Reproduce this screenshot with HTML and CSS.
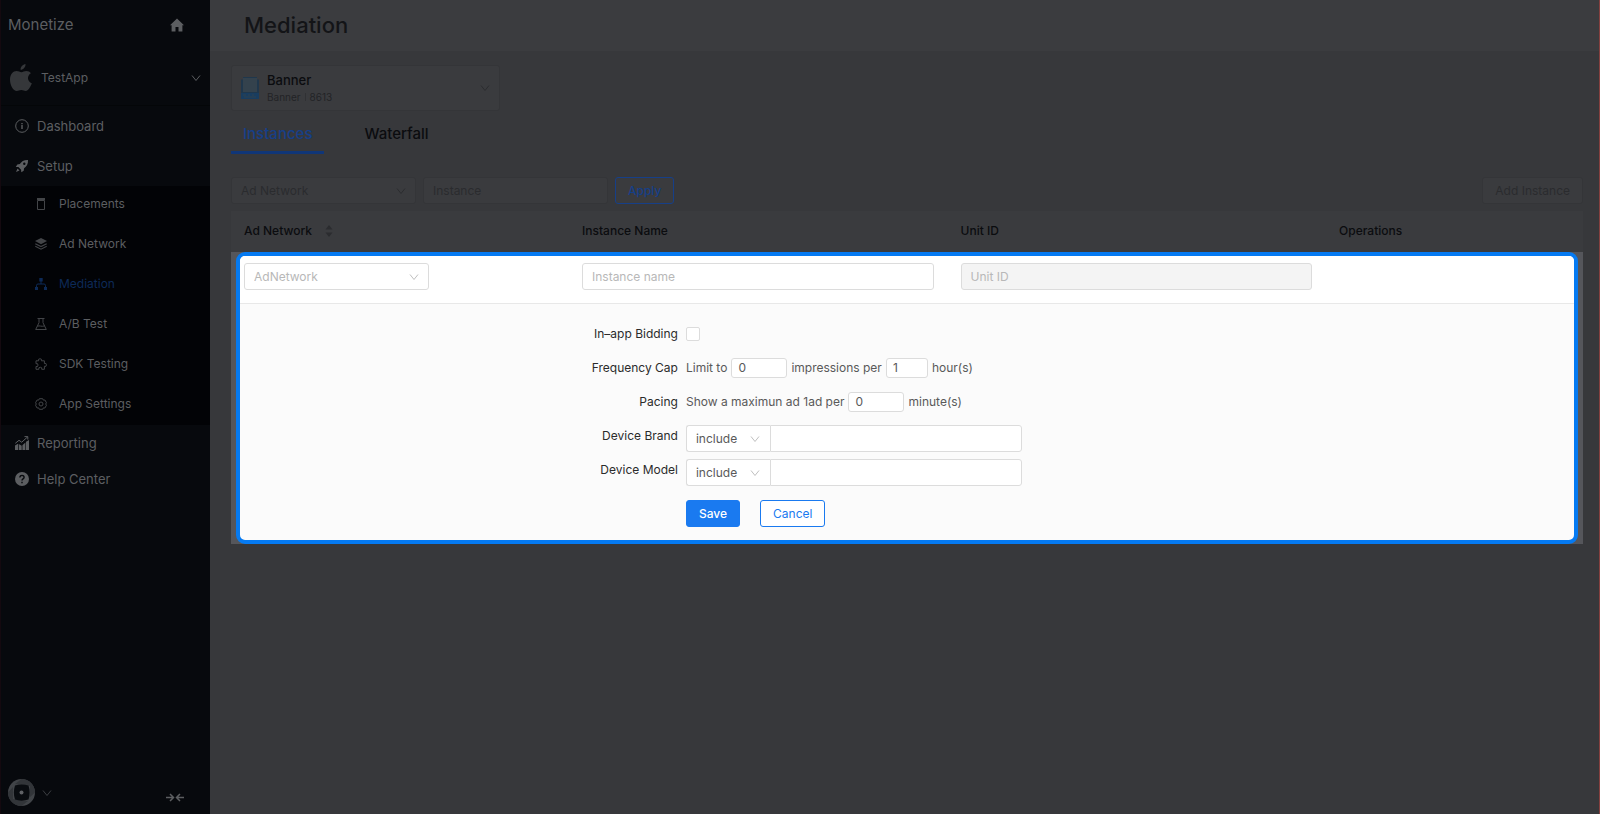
FILE: index.html
```
<!DOCTYPE html>
<html lang="en">
<head>
  <meta charset="UTF-8">
  <meta name="viewport" content="width=device-width, initial-scale=1.0">
  <title>Monetize - Mediation</title>
  <link rel="stylesheet" href="styles.css">
</head>
<body>
  <svg class="sprite" aria-hidden="true">
    <symbol id="chevron" viewBox="0 0 10 8"><path d="M1 1.5l4 5 4-5" fill="none" stroke="currentColor"/></symbol>
  </svg>

  <aside class="sidebar">
    <div class="brand">
      <span>Monetize</span>
      <a href="#" aria-label="Home">
        <svg width="14" height="14" viewBox="0 0 14 14"><path fill="currentColor" d="M7 .5L0 7.2h1.6V13.500h3.900V9h3v4.500h3.900V7.200H14z"/></svg>
      </a>
    </div>
    <button class="app-switch">
      <svg width="22" height="28" viewBox="0 0 22 28"><path fill="currentColor" d="M15.500 0c.3 2.900-2.100 5.800-4.900 5.800C10.300 3 12.900.3 15.500 0zM20.900 9.300c-4.300 2.600-3.700 8.200.9 10-1.300 3.700-3.700 7.600-6 7.600-1.700 0-2.400-1-4.500-1s-2.900 1-4.500 1C3.300 26.900 0 21.300 0 15.700 0 10.200 3.200 7 6.600 7c2 0 3.300 1.200 4.800 1.200S14.200 7 16.500 7c1.700 0 3.400.9 4.400 2.300z"/></svg>
      <span>TestApp</span>
      <svg class="chev" width="10" height="8"><use href="#chevron"/></svg>
    </button>

    <nav>
      <div class="menu top-menu">
        <a href="#">
          <svg width="14" height="14" viewBox="0 0 14 14" fill="none" stroke="currentColor"><circle cx="7" cy="7" r="6.300"/><path d="M7 6v4M7 4v1.200" stroke-width="1.400"/></svg>
          Dashboard
        </a>
        <a href="#">
          <svg width="14" height="14" viewBox="0 0 14 14"><path fill="currentColor" fill-rule="evenodd" d="M13 1C9 .8 6.500 2.500 4.800 5L2.300 5.400.8 7.900l2.600.1 2.700 2.700.2 2.600 2.400-1.500.4-2.500C11.600 7.500 13.300 5 13 1zM9.300 3.600a1.200 1.200 0 1 1 0 2.400 1.200 1.200 0 0 1 0-2.400zM2.500 9.500L1 13l3.500-1.500z"/></svg>
          Setup
        </a>
      </div>
      <div class="submenu">
        <a href="#">
          <svg width="12" height="12" viewBox="0 0 12 12" fill="none" stroke="currentColor"><path d="M2.500 2.500h7v9h-7z"/><path d="M2 1h8" stroke-width="2"/></svg>
          Placements
        </a>
        <a href="#">
          <svg width="12" height="12" viewBox="0 0 12 12"><path fill="currentColor" d="M6 0l6 3-6 3.200L0 3z"/><path d="M.3 5.700L6 8.600l5.700-2.900M.3 8.300L6 11.200l5.700-2.900" fill="none" stroke="currentColor" stroke-width="1.100"/></svg>
          Ad Network
        </a>
        <a href="#" class="active">
          <svg width="12" height="12" viewBox="0 0 12 12"><path fill="currentColor" d="M4.300 0h3.400v3.400H4.300zM0 9h3v3H0zM9 9h3v3H9z"/><path d="M6 3v3M1.500 9.500V7.500Q1.500 6 3 6h6q1.500 0 1.500 1.500v2" fill="none" stroke="currentColor"/></svg>
          Mediation
        </a>
        <a href="#">
          <svg width="12" height="12" viewBox="0 0 12 12" fill="none" stroke="currentColor"><path d="M2.500.5h7M4 .5v4.200L.7 11.500h10.600L8 4.700V.5M2.500 8.200c2-1 4 .8 7-.3"/></svg>
          A/B Test
        </a>
        <a href="#">
          <svg width="12" height="12" viewBox="0 0 12 12" fill="none" stroke="currentColor"><path d="M1 2.800h2.600a1.500 1.500 0 1 1 2.800 0h3V5.500a1.500 1.500 0 1 1 0 2.800v3H6.700a1.500 1.500 0 1 0-2.800 0H1V8.500a1.500 1.500 0 1 0 0-2.800z"/></svg>
          SDK Testing
        </a>
        <a href="#">
          <svg width="12" height="12" viewBox="0 0 12 12" fill="none" stroke="currentColor"><path d="M4.300.7h3.400l.6 1.400 1.600-.1 1.600 2.800L10.600 6l.9 1.200-1.600 2.800-1.600-.1-.6 1.400H4.300l-.6-1.400-1.600.1L.5 7.200 1.400 6 .5 4.800 2.100 2l1.600.1z"/><circle cx="6" cy="6" r="2"/></svg>
          App Settings
        </a>
      </div>
      <div class="menu">
        <a href="#">
          <svg width="14" height="14" viewBox="0 0 14 14"><path fill="currentColor" d="M0 9.500l3-1.700V14H0zM3.700 8l3 1.700V14h-3zM7.400 9.300l3-2.800V14h-3zM11 5.700L14 4v10h-3z"/><path d="M.3 7.300L4 4.300l2.700 1.900L12.500 1M9.500.6h3.300v3" fill="none" stroke="currentColor"/></svg>
          Reporting
        </a>
        <a href="#">
          <svg width="14" height="14" viewBox="0 0 14 14"><circle cx="7" cy="7" r="7" fill="currentColor"/><path d="M4.900 5.400c0-2.800 4.300-2.600 4.200-.1C9.100 7 7 6.800 7 8.600M7 9.700v1.500" fill="none" stroke="#07090d" stroke-width="1.400"/></svg>
          Help Center
        </a>
      </div>
    </nav>

    <div class="side-foot">
      <button class="account" aria-label="Account">
        <svg width="27" height="27" viewBox="0 0 27 27"><circle cx="13.500" cy="13.500" r="13.500" fill="#414448"/><path d="M13.500 0A13.500 13.500 0 0 1 27 13.500L22 18V7L7 5zM13.500 27A13.500 13.500 0 0 1 0 13.500L5 8v12l15 2z" fill="#323539"/><path d="M7 6.500c4-1.500 9-1.500 13.500 0 1.500 4.500 1.500 9.500 0 14-4.500 1.500-9.500 1.500-13.500 0-1.500-4.500-1.500-9.500 0-14z" fill="#090c10"/><circle cx="13.500" cy="13.500" r="2" fill="#606266"/></svg>
        <svg width="12" height="8"><use href="#chevron"/></svg>
      </button>
      <button class="collapse" aria-label="Collapse menu">
        <svg width="18" height="9" viewBox="0 0 18 9" fill="none" stroke="currentColor" stroke-width="1.500"><path d="M0 4.500h7.500M4 1l3.500 3.500L4 8M18 4.500h-7.500M14 1l-3.500 3.500L14 8"/></svg>
      </button>
    </div>
  </aside>

  <main class="main">
    <header class="page-head"><h1>Mediation</h1></header>

    <div class="content">
      <button class="placement">
        <svg width="18" height="23" viewBox="0 0 18 23"><path d="M0 2.500h2V0h14v2.500h2V22H0z" fill="#20374c"/><path d="M2 1h14v14H2z" fill="#34424d"/><path d="M0 16h18v6H0z" fill="#193d60"/><path d="M2 18h3M7 18h2M11 18h2M3 20h12" stroke="#31424f"/></svg>
        <span class="placement-text">
          <b>Banner</b>
          <small>Banner <i></i> 8613</small>
        </span>
        <svg class="chev" width="10" height="8"><use href="#chevron"/></svg>
      </button>

      <div class="tabs" role="tablist">
        <button role="tab" class="tab current" aria-selected="true">Instances</button>
        <button role="tab" class="tab" aria-selected="false">Waterfall</button>
      </div>

      <div class="filters">
        <div class="select wide">
          <select aria-label="Ad Network"><option>Ad Network</option></select>
          <svg width="10" height="8"><use href="#chevron"/></svg>
        </div>
        <input class="wide" type="text" placeholder="Instance" aria-label="Instance">
        <button class="btn apply">Apply</button>
        <button class="btn add" disabled>Add Instance</button>
      </div>

      <table class="instances">
        <thead>
          <tr>
            <th class="col-network">Ad Network
              <svg class="sorter" width="8" height="12" viewBox="0 0 8 12"><path fill="currentColor" d="M4 0l3.500 4.500h-7zM4 12l3.500-4.500h-7z"/></svg>
            </th>
            <th class="col-field">Instance Name</th>
            <th class="col-field">Unit ID</th>
            <th>Operations</th>
          </tr>
        </thead>
        <tbody>
          <tr>
            <td colspan="4">
              <form class="editor">
                <div class="editor-row">
                  <div class="select wide">
                    <select aria-label="AdNetwork"><option>AdNetwork</option></select>
                    <svg width="10" height="8"><use href="#chevron"/></svg>
                  </div>
                  <input type="text" placeholder="Instance name" aria-label="Instance name">
                  <input type="text" placeholder="Unit ID" aria-label="Unit ID" disabled>
                </div>
                <div class="editor-form">
                  <div class="item">
                    <label for="bidding">In–app Bidding</label>
                    <div class="control"><input id="bidding" type="checkbox"></div>
                  </div>
                  <div class="item">
                    <label for="cap">Frequency Cap</label>
                    <div class="control">
                      Limit to <input id="cap" class="num" type="text" value="0">
                      impressions per <input class="num short" type="text" value="1" aria-label="Hours"> hour(s)
                    </div>
                  </div>
                  <div class="item">
                    <label for="pacing">Pacing</label>
                    <div class="control">
                      Show a maximun ad 1ad per <input id="pacing" class="num" type="text" value="0"> minute(s)
                    </div>
                  </div>
                  <div class="item">
                    <label for="brand">Device Brand</label>
                    <div class="control group">
                      <div class="select">
                        <select aria-label="Brand rule"><option>include</option><option>exclude</option></select>
                        <svg width="10" height="8"><use href="#chevron"/></svg>
                      </div>
                      <input id="brand" type="text">
                    </div>
                  </div>
                  <div class="item">
                    <label for="model">Device Model</label>
                    <div class="control group">
                      <div class="select">
                        <select aria-label="Model rule"><option>include</option><option>exclude</option></select>
                        <svg width="10" height="8"><use href="#chevron"/></svg>
                      </div>
                      <input id="model" type="text">
                    </div>
                  </div>
                  <div class="actions">
                    <button type="button" class="btn save">Save</button>
                    <button type="button" class="btn cancel">Cancel</button>
                  </div>
                </div>
              </form>
            </td>
          </tr>
        </tbody>
      </table>
    </div>
  </main>
</body>
</html>
```

FILE: styles.css
```
* {
  box-sizing: border-box;
}
body {
  margin: 0;
  min-height: 100vh;
  display: flex;
  background: #37383b;
  border-left: 1px solid #14090f;
  border-right: 1px solid #84403f;
  font-family: Inter, "Liberation Sans", sans-serif;
  font-size: 12px;
  line-height: 20px;
  color: #0b0c0f;
}
button, input, select {
  font: inherit;
  color: inherit;
}
button {
  background: none;
  border: none;
  padding: 0;
  cursor: pointer;
}
a {
  color: inherit;
  text-decoration: none;
}
svg {
  flex: none;
  display: block;
}
.sprite {
  position: absolute;
  width: 0;
  height: 0;
}

/* sidebar */
.sidebar {
  width: 209px;
  flex: none;
  display: flex;
  flex-direction: column;
  background: #07090d;
  color: #5c5e61;
}
.brand {
  display: flex;
  align-items: center;
  justify-content: space-between;
  height: 50px;
  padding: 0 26px 0 7px;
  font-size: 15px;
}
.app-switch {
  display: flex;
  align-items: center;
  gap: 9px;
  height: 56px;
  padding: 0 9px;
  border-bottom: 1px solid #040608;
  text-align: left;
}
.app-switch svg:first-child {
  color: #35373a;
}
.chev {
  margin-left: auto;
}
.menu a {
  display: flex;
  align-items: center;
  gap: 8px;
  height: 36px;
  padding-left: 14px;
  font-size: 13px;
}
.top-menu a {
  height: 40px;
}
.submenu {
  display: flex;
  flex-direction: column;
  gap: 4px;
  padding-bottom: 3px;
  background: #020306;
}
.submenu a {
  display: flex;
  align-items: center;
  gap: 12px;
  height: 36px;
  padding-left: 34px;
}
.submenu svg {
  color: #434548;
}
.submenu .active,
.submenu .active svg {
  color: #0d2a57;
}
.side-foot {
  display: flex;
  align-items: center;
  justify-content: space-between;
  margin-top: auto;
  padding: 0 26px 8px 7px;
}
.account {
  display: flex;
  align-items: center;
  gap: 6px;
  color: #3c3e42;
}
.collapse {
  padding-top: 10px;
}

/* page */
.main {
  flex: 1;
  min-width: 0;
}
.page-head {
  height: 51px;
  padding-left: 34px;
  background: #3b3c3f;
}
h1 {
  margin: 0;
  font-size: 22px;
  font-weight: 500;
  line-height: 50px;
  color: #131417;
}
.content {
  padding: 14px 16px 0 21px;
}
.placement {
  display: flex;
  align-items: center;
  gap: 8px;
  width: 269px;
  height: 46px;
  padding: 0 9px;
  background: #3a3b3e;
  border: 1px solid #343538;
  border-radius: 3px;
  text-align: left;
}
.placement-text b {
  display: block;
  font-size: 13px;
  font-weight: 500;
  line-height: 18px;
}
.placement-text small {
  display: flex;
  align-items: center;
  font-size: 10px;
  line-height: 16px;
  color: #222326;
}
.placement-text i {
  width: 1px;
  height: 8px;
  margin: 0 4px;
  background: #303134;
}
.placement .chev,
.filters .select svg {
  color: #2b2c2f;
}
.tabs {
  display: flex;
  gap: 27px;
}
.tab {
  height: 43px;
  padding: 5px 13px 0;
  border-bottom: 3px solid transparent;
  font-size: 15px;
  font-weight: 500;
}
.tab.current {
  padding: 5px 12px 0;
  color: #163f88;
  border-color: #103678;
}
.filters {
  display: flex;
  gap: 7px;
  margin: 23px 0 7px;
}
input[type="text"],
select {
  display: block;
  width: 100%;
  height: 27px;
  padding: 0 9px;
  background: #fff;
  border: 1px solid #dcdcdc;
  border-radius: 3px;
  color: #595959;
  appearance: none;
}
input::placeholder {
  color: #b8b8b8;
  opacity: 1;
}
.select {
  position: relative;
}
.select svg {
  position: absolute;
  right: 10px;
  top: 10px;
  color: #bfbfbf;
  pointer-events: none;
}
.select.wide,
input.wide {
  width: 185px;
}
.filters input.wide,
.filters select {
  background: #3a3b3e;
  border-color: #343538;
  color: #2a2b2e;
}
.filters input::placeholder {
  color: #2a2b2e;
}
.btn {
  height: 27px;
  padding: 0 12px;
  border: 1px solid #1a7af0;
  border-radius: 3px;
  background: #fff;
  color: #1a7af0;
}
.apply {
  background: #3a3b3e;
  border-color: #163f88;
  color: #163f88;
  font-weight: 500;
}
.add {
  margin-left: auto;
  background: #3a3b3e;
  border-color: #343538;
  color: #2a2b2e;
}

/* instances table */
.instances {
  width: 100%;
  table-layout: fixed;
  border-collapse: collapse;
}
.instances th {
  height: 41px;
  padding: 0 13px 2px;
  background: #3a3b3e;
  text-align: left;
  font-weight: 500;
}
.col-network {
  width: 25%;
}
.col-field {
  width: 28%;
}
.sorter {
  display: inline-block;
  margin-left: 10px;
  vertical-align: middle;
  color: #2b2c2f;
}
.instances td {
  padding: 0 5px;
  background: #55565b;
}
.editor {
  border: 4px solid #057af2;
  border-radius: 9px;
  overflow: hidden;
  background: #fbfbfb;
}
/* pulled out under the frame so the fields line up with the table columns */
.editor-row {
  display: grid;
  grid-template-columns: 25% 28% 28%;
  margin: 0 -9px;
  padding: 7px 0 13px;
  background: #fff;
  border-bottom: 1px solid #e8e8e8;
}
.editor-row > * {
  margin-left: 13px;
}
.editor-row > input[type="text"] {
  width: calc(100% - 27px);
}
.editor-row select {
  color: #b8b8b8;
}
input[type="text"]:disabled {
  background: #f4f4f4;
}
.editor-form {
  margin: 0 -9px;
  padding: 20px 13px 13px;
}
.item {
  display: flex;
  min-height: 27px;
  margin-bottom: 7px;
}
.item > label {
  width: 33.33%;
  padding-right: 8px;
  text-align: right;
  color: #2b2b2b;
}
.control {
  display: flex;
  align-items: center;
  gap: 4px;
  height: 20px;
  color: #595959;
}
input[type="checkbox"] {
  width: 14px;
  height: 14px;
  margin: 0;
  background: #fff;
  border: 1px solid #dcdcdc;
  border-radius: 2px;
  appearance: none;
}
input.num {
  width: 56px;
  height: 20px;
  padding: 0 6px;
}
input.num.short {
  width: 42px;
}
.group {
  width: 336px;
  height: 27px;
  gap: 0;
  margin-top: -1px;
}
.group .select {
  width: 84px;
  flex: none;
}
.group select {
  border-right: none;
  border-radius: 3px 0 0 3px;
}
.group input[type="text"] {
  border-radius: 0 3px 3px 0;
}
.actions {
  display: flex;
  gap: 20px;
  margin-left: 33.33%;
  padding-top: 6px;
}
.save {
  background: #1a7af0;
  color: #fff;
  font-weight: 500;
}
```
